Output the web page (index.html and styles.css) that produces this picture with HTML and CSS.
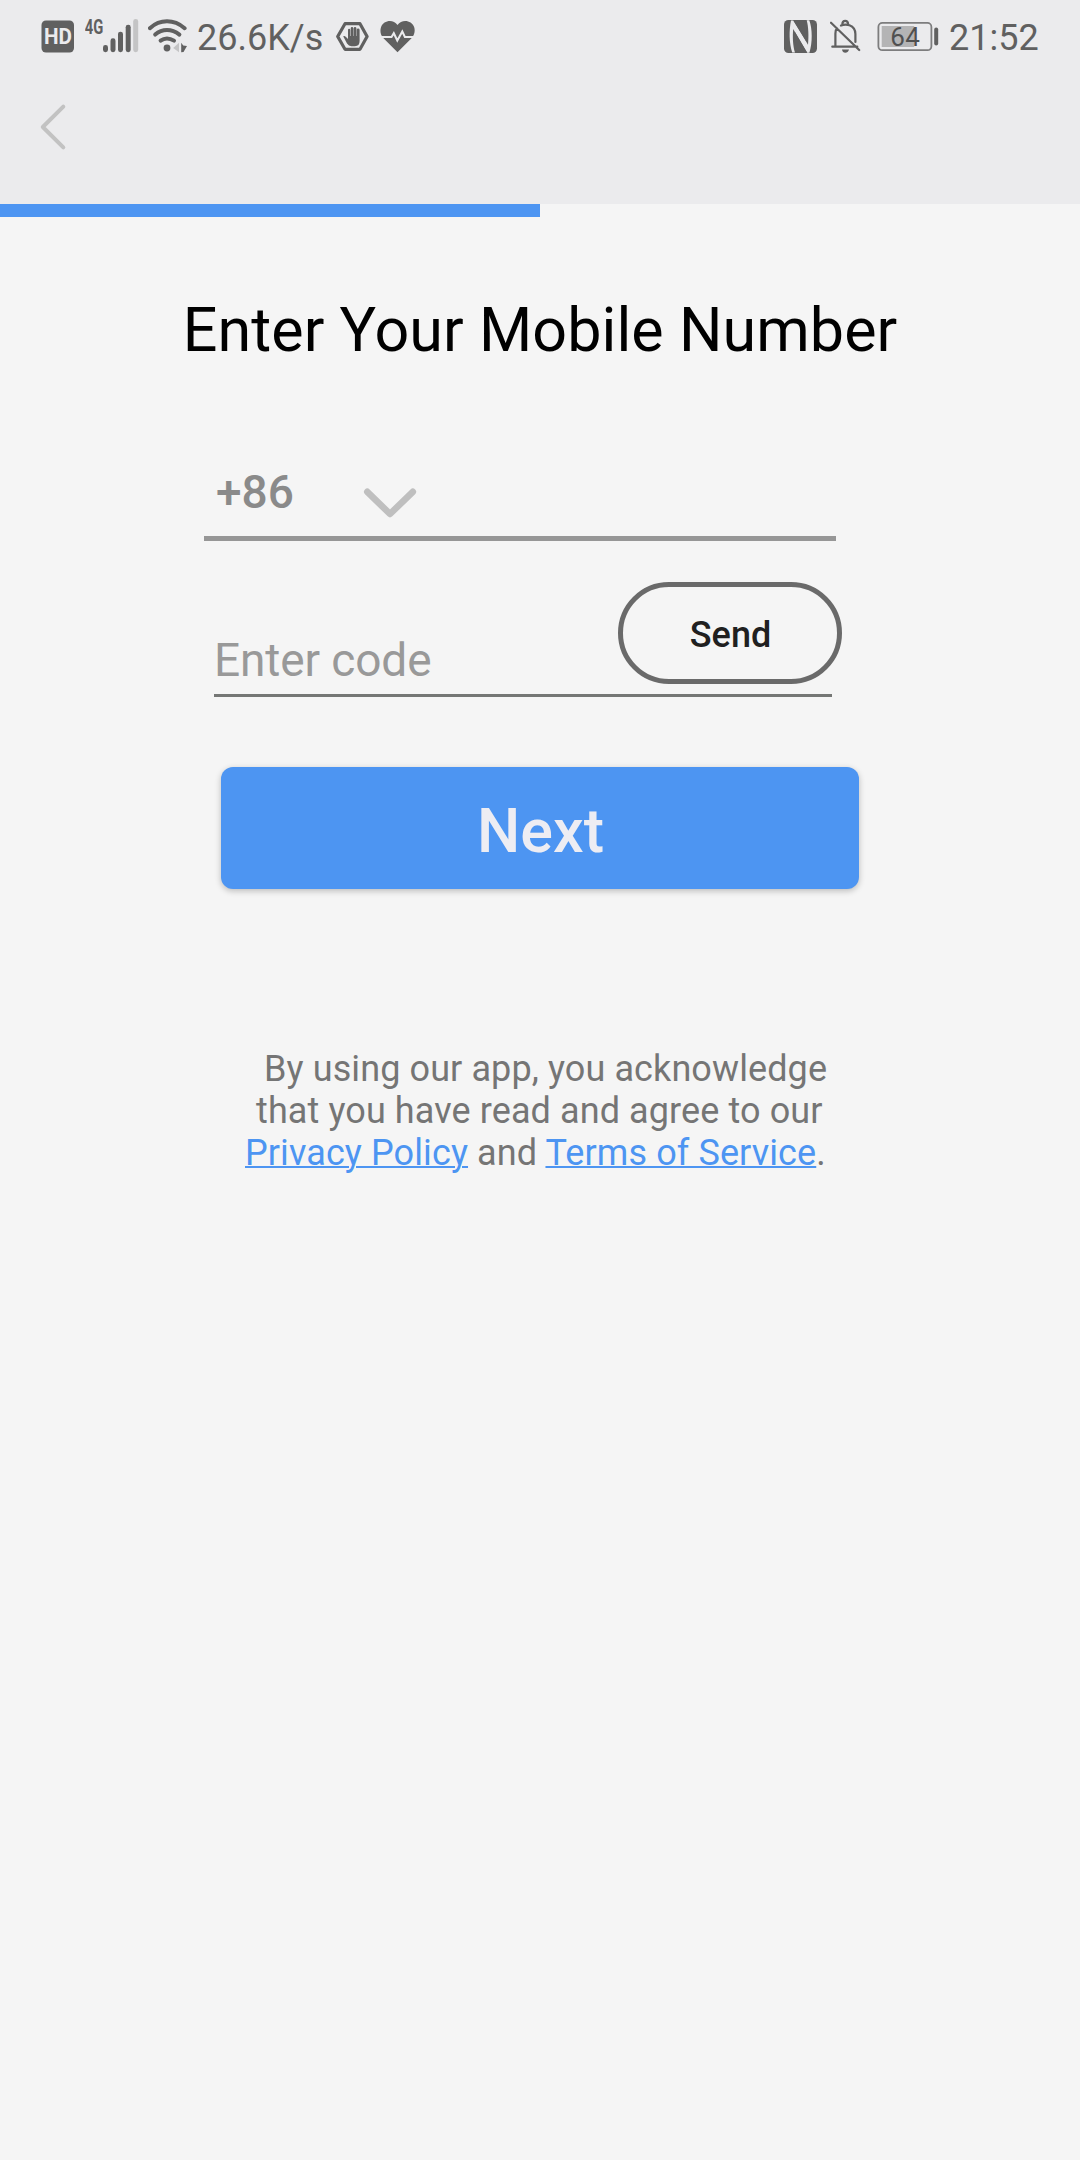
FILE: index.html
```html
<!DOCTYPE html>
<html lang="en">
<head>
<meta charset="utf-8">
<title>Enter Your Mobile Number</title>
<link rel="stylesheet" href="styles.css">
</head>
<body>
<header class="header">
  <div class="status">
    <div class="status-left">
      <svg class="icon" width="34" height="60" viewBox="41 0 34 60">
        <rect x="41.5" y="20.5" width="32.5" height="32" rx="4.5"/>
        <text class="hd" x="44" y="43.9" textLength="28" lengthAdjust="spacingAndGlyphs">HD</text>
      </svg>
      <svg class="icon signal" width="54" height="60" viewBox="85 0 54 60">
        <text class="net" x="84.8" y="33.7" textLength="18.5" lengthAdjust="spacingAndGlyphs">4G</text>
        <rect x="103" y="45" width="5" height="7.2" rx="2.4"/>
        <rect x="110.5" y="38.3" width="5" height="13.9" rx="2.4"/>
        <rect x="118" y="31.7" width="5" height="20.5" rx="2.4"/>
        <rect x="125.7" y="24.8" width="5" height="27.4" rx="2.4"/>
        <rect class="faint" x="133.2" y="19" width="5" height="33.2" rx="2.4"/>
      </svg>
      <svg class="icon wifi" width="40" height="60" viewBox="148 0 40 60">
        <g class="line wide">
          <path d="M149.9 28.2Q157.5 21.3 167 21.3T184.6 28.2"/>
          <path d="M155.2 34.6Q160.5 30 167 30T179.4 34.6"/>
          <path d="M160.6 40.6Q163.5 38.4 167 38.4T174 40.6"/>
        </g>
        <circle cx="167" cy="48" r="3.4"/>
        <path class="faint" d="M179 42.7V52.2L173.2 48Z"/>
        <path d="M181.2 42.7L183.2 45.5L187 46L183.5 52L181.2 52.3Z"/>
      </svg>
      <span class="speed">26.6K/s</span>
      <svg class="icon hand" width="34" height="60" viewBox="336 0 34 60">
        <path class="line hex" d="M345 23.7H360L367.1 36.5L360 49.3H345L337.7 36.5Z"/>
        <path d="M343.2 36.2Q344.5 35.4 346 37L348 39V30Q348 28.7 349.1 28.7T350.2 30V36H350.7V28.4Q350.7 27.1 352 27.1T353.4 28.4V36H353.8V28.1Q353.8 26.9 355 26.9T356.4 28.1V36H356.8V29.8Q356.8 28.6 358.1 28.6T359.6 29.8V41Q359.6 46.2 355 46.2H351.5Q348.7 46.2 347 43.6Z"/>
      </svg>
      <svg class="icon heart" width="36" height="60" viewBox="380 0 36 60">
        <path d="M397.5 52.2L383.5 38.3C380.5 35 379.8 30.8 381 27.3C383.5 20.3 393 18.7 397.5 25C402 18.7 411.8 20.3 414.2 27.3C415.3 31 414.5 35 411.5 38.3Z"/>
        <path class="pulse" d="M380 37H391.5L393.8 33.2L397.3 40.5L402.3 31.5L404.9 37H416"/>
      </svg>
    </div>
    <div class="status-right">
      <svg class="icon" width="34" height="60" viewBox="784 0 34 60">
        <rect x="784" y="20" width="33" height="33" rx="4.5"/>
        <path class="cut" d="M791 20.5C789 30 789 43 792.2 52.5H795C792.8 46 792.5 36 793.2 29L807.2 52.7H809.4C812.5 43 812.5 29 809.3 20.3H806.7C808.6 27 808.8 37 808 44.7L793.6 20.5Z"/>
        <path d="M793 20.3H802Q804.4 20.3 805.2 23.2Q806.8 31 806.3 41.5ZM795 32L807.2 52.7H799Q796.6 52.7 796 50Q794.4 42 795 32Z"/>
      </svg>
      <svg class="icon bell" width="31" height="60" viewBox="830 0 31 60">
        <g class="line thin">
          <path d="M832.3 46.7H857.3M835.4 46V33.5Q835.4 30 837 28.4M841 25.6Q845 23.8 849.5 25.2Q855.4 27.4 855.4 34V42M842.3 24.8Q842.3 20.8 845.2 20.8T848.2 24.8M831 22.7L859.2 50"/>
        </g>
        <path d="M842 49.6H849Q848 52.8 845.3 52.8T842 49.6Z"/>
      </svg>
      <svg class="icon battery" width="62" height="60" viewBox="877 0 62 60">
        <rect class="cell" x="878.4" y="22.9" width="53" height="27.3" rx="4"/>
        <rect class="charge" x="881.7" y="26" width="32.5" height="21"/>
        <rect x="934.2" y="27.5" width="4" height="18" rx="2"/>
        <text class="level" x="890.3" y="45.8" textLength="29.5">64</text>
      </svg>
      <span class="clock">21:52</span>
    </div>
  </div>
  <svg class="back" width="30" height="50" viewBox="38 102 30 50"><path d="M63.3 106.7L42.8 127L63.3 147.3"/></svg>
</header>
<div class="progress"><div class="progress-value"></div></div>
<main class="content">
  <h1 class="title">Enter Your Mobile Number</h1>
  <div class="phone">
    <span class="prefix">+86</span>
    <svg class="chevron" width="54" height="32" viewBox="363 487 54 32"><path d="M367.3 491.8L390 514L412.8 491.8"/></svg>
  </div>
  <div class="code">
    <span class="placeholder">Enter code</span>
    <button class="send">Send</button>
  </div>
  <button class="next">Next</button>
  <div class="legal">
    <div class="legal-line first">By using our app, you acknowledge</div>
    <div class="legal-line second">that you have read and agree to our</div>
    <div class="legal-line"><a class="link">Privacy Policy</a> and <a class="link">Terms of Service</a>.</div>
  </div>
</main>
</body>
</html>
```
FILE: styles.css
```css
* { box-sizing: border-box; }
body {
  margin: 0;
  min-height: 2160px;
  background: #f5f5f5;
  font-family: Roboto, sans-serif;
  white-space: nowrap;
}
button { font-family: inherit; padding: 0; }
.header { height: 204px; background: #ebebed; }
.status {
  display: flex;
  justify-content: space-between;
  height: 74px;
  padding: 0 41px;
  color: #606060;
  font-size: 36px;
  line-height: 76px;
}
.status-left, .status-right { display: flex; }
.icon { flex: none; fill: #606060; }
.icon .faint { fill: #c4c4c5; }
.icon .line { fill: none; stroke: #606060; stroke-linecap: round; }
.icon .wide { stroke-width: 4; }
.icon .hex { stroke-width: 3.2; stroke-linejoin: round; }
.icon .thin { stroke-width: 2.2; }
.icon .pulse { fill: none; stroke: #ebebed; stroke-width: 2; }
.icon .cut { fill: #ebebed; }
.hd { fill: #ebebed; font-size: 21.5px; font-weight: 700; }
.net { font-size: 20px; font-weight: 700; }
.signal { margin-left: 10px; }
.wifi { margin-left: 9px; }
.speed { width: 139px; padding-left: 9px; }
.hand { margin-left: 9px; }
.heart { margin-left: 10px; }
.bell { margin-left: 12px; }
.battery { margin-left: 16px; }
.battery .cell { fill: none; stroke: #7d7d7e; stroke-width: 1.8; }
.battery .charge { fill: #b4b4b5; }
.battery .level { fill: #505050; font-size: 26px; }
.clock { width: 100px; padding-left: 10px; }
.back { display: block; margin: 28px 0 0 38px; fill: none; stroke: #c2c2c2; stroke-width: 4; stroke-linecap: round; stroke-linejoin: round; }
.progress { height: 13px; }
.progress-value { width: 50%; height: 100%; background: #4d95f2; }
.content { display: flex; flex-direction: column; }
.title {
  margin: 78px 0 0;
  text-align: center;
  color: #000;
  font-size: 61px;
  font-weight: 400;
  line-height: 70px;
  letter-spacing: 0.08px;
}
.phone {
  display: flex;
  width: 632px;
  height: 92px;
  margin: 84px 0 0 204px;
  padding-left: 12px;
  border-bottom: 5px solid #969696;
  line-height: 86px;
  color: #8a8a8a;
  font-size: 46px;
  font-weight: 500;
}
.prefix { width: 147px; }
.chevron { margin-top: 38px; fill: none; stroke: #bfbfbf; stroke-width: 6.6; stroke-linecap: round; stroke-linejoin: round; }
.code {
  display: flex;
  justify-content: space-between;
  width: 618px;
  height: 115px;
  margin: 41px 0 0 214px;
  border-bottom: 3px solid #757775;
}
.placeholder { color: #999; font-size: 46px; line-height: 156px; letter-spacing: -0.12px; }
.send {
  width: 224px;
  height: 102px;
  margin-right: -10px;
  padding: 2px 0 0 1px;
  border: 5px solid #6a6a6a;
  border-radius: 51px;
  background: transparent;
  color: #202020;
  font-size: 36px;
  font-weight: 500;
  line-height: 92px;
}
.next {
  width: 638px;
  height: 122px;
  margin: 70px 0 0 221px;
  padding: 5px 0 0 1px;
  border: 0;
  border-radius: 12px;
  background: #4d95f2;
  box-shadow: 0 2px 6px rgba(0, 0, 0, 0.24);
  color: #ededf3;
  font-size: 61px;
  font-weight: 500;
}
.legal {
  margin: 159px 0 0 245px;
  color: #757575;
  font-size: 36px;
  line-height: 42px;
  letter-spacing: 0.1px;
}
.first { padding-left: 19px; }
.second { padding-left: 11px; }
.link { color: #4d95f2; text-decoration: underline; text-decoration-thickness: 2px; }
```
